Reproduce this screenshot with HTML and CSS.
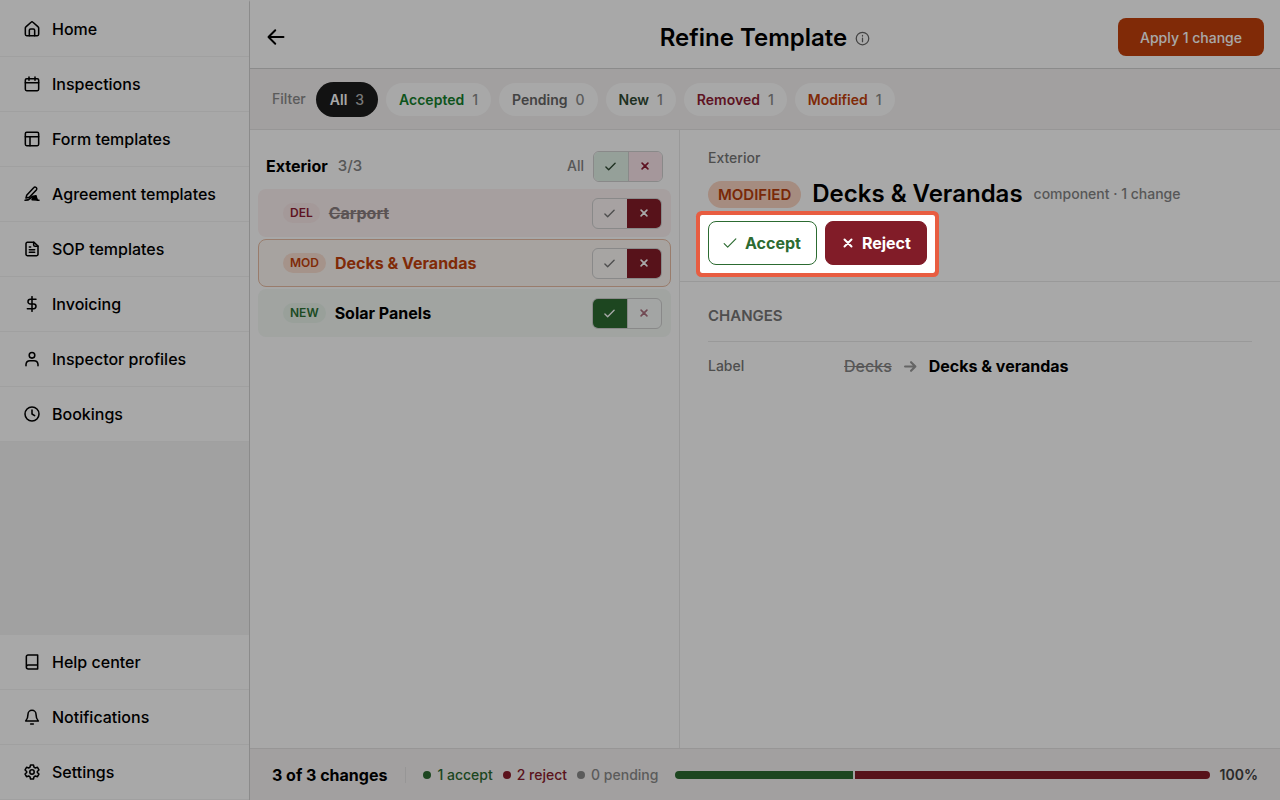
FILE: index.html
```html
<!DOCTYPE html>
<html lang="en">
    <head>
        <meta charset="utf-8">
        <meta name="viewport" content="width=device-width, initial-scale=1">
        <title>Refine Template</title>
        <link rel="stylesheet" href="styles.css">
    </head>
    <body>
        <!-- shared icons -->
        <svg class="sprite" aria-hidden="true">
            <symbol id="check" viewBox="0 0 24 24"><path d="M2 13l6 6L22 5"/></symbol>
            <symbol id="cross" viewBox="0 0 24 24"><path d="M5 5l14 14M19 5L5 19"/></symbol>
        </svg>

        <nav class="sidebar">
            <ul>
                <li><a href="#"><svg class="icon" viewBox="0 0 24 24"><path d="M2 10.500a2 2 0 0 1 .8-1.600l7.800-7a2 2 0 0 1 2.800 0l7.800 7a2 2 0 0 1 .8 1.600V20a2 2 0 0 1-2 2H4a2 2 0 0 1-2-2z"/><path d="M8 22v-8a2 2 0 0 1 2-2h4a2 2 0 0 1 2 2v8"/></svg>Home</a></li>
                <li><a href="#"><svg class="icon" viewBox="0 0 24 24"><rect x="2" y="4" width="20" height="18" rx="2"/><path d="M2 10h20M7.500 1.500v5M16.500 1.500v5"/></svg>Inspections</a></li>
                <li><a href="#"><svg class="icon" viewBox="0 0 24 24"><rect x="2" y="2" width="20" height="20" rx="2"/><path d="M2 8.500h20M9 8.500V22"/></svg>Form templates</a></li>
                <li><a href="#"><svg class="icon" viewBox="0 0 24 24"><path d="M4 14L14.500 2.500a2.600 2.600 0 0 1 4 3.400L8 17l-5 1z"/><path d="M1.500 21.500c4 0 6-1 8-3l3-3M20 21.500h2.500"/><path d="M12 20.500l2-5 4-1 1 4 1 2.500z" fill="currentColor"/></svg>Agreement templates</a></li>
                <li><a href="#"><svg class="icon" viewBox="0 0 24 24"><path d="M15 2H5a2 2 0 0 0-2 2v16a2 2 0 0 0 2 2h14a2 2 0 0 0 2-2V7.500z"/><path d="M14.500 2v4a2 2 0 0 0 2 2h4.500M8 9h2M8 13h8M8 17h8"/></svg>SOP templates</a></li>
                <li><a href="#"><svg class="icon" viewBox="0 0 24 24"><path d="M12 1v22M18 5H9.500a3.500 3.500 0 0 0 0 7h5a3.500 3.500 0 0 1 0 7H5"/></svg>Invoicing</a></li>
                <li><a href="#"><svg class="icon" viewBox="0 0 24 24"><circle cx="12" cy="6.500" r="4.200"/><path d="M3 22v-2a6 6 0 0 1 6-5.500h6a6 6 0 0 1 6 5.500v2"/></svg>Inspector profiles</a></li>
                <li><a href="#"><svg class="icon" viewBox="0 0 24 24"><circle cx="12" cy="12" r="10.500"/><path d="M12 6v6l4 2.500"/></svg>Bookings</a></li>
            </ul>
            <ul>
                <li><a href="#"><svg class="icon" viewBox="0 0 24 24"><path d="M3.500 19.500V4A2.500 2.500 0 0 1 6 1.500h14.500v21h-14a3 3 0 0 1 0-6h14"/></svg>Help center</a></li>
                <li><a href="#"><svg class="icon" viewBox="0 0 24 24"><path d="M6 8a6 6 0 0 1 12 0c0 6 1.500 8 3.500 10h-19C4.500 16 6 14 6 8z"/><path d="M10 22.500h4"/></svg>Notifications</a></li>
                <li><a href="#"><svg class="icon" viewBox="0 0 24 24"><path d="M9.800 1.500h4.400l.8 3.300 2 1.200 3.200-1 2.200 3.900-2.400 2.300v1.600l2.400 2.300-2.200 3.900-3.200-1-2 1.200-.8 3.300H9.800L9 19.200 7 18l-3.200 1-2.200-3.900L4 12.800v-1.600L1.600 8.900 3.800 5 7 6l2-1.200z"/><circle cx="12" cy="12" r="3.300"/></svg>Settings</a></li>
            </ul>
        </nav>

        <div class="page">
            <header class="page-header">
                <a class="back" href="#" aria-label="Back"><svg viewBox="0 0 24 24"><path d="M22 12H3M11 3L2 12l9 9"/></svg></a>
                <h1>Refine Template <svg class="info" viewBox="0 0 24 24"><circle cx="12" cy="12" r="10"/><path d="M12 17v-5.500M12 7v1"/></svg></h1>
                <button class="apply" type="button">Apply 1 change</button>
            </header>

            <div class="filters">
                <span class="filter-label">Filter</span>
                <button class="pill active" type="button">All <span>3</span></button>
                <button class="pill accepted" type="button">Accepted <span>1</span></button>
                <button class="pill pending" type="button">Pending <span>0</span></button>
                <button class="pill new" type="button">New <span>1</span></button>
                <button class="pill removed" type="button">Removed <span>1</span></button>
                <button class="pill modified" type="button">Modified <span>1</span></button>
            </div>

            <main class="panes">
                <section class="list">
                    <div class="group">
                        <h2>Exterior</h2>
                        <span class="group-count">3/3</span>
                        <span class="group-all">All</span>
                        <div class="toggle toggle-all">
                            <button class="yes" type="button" aria-label="Accept all"><svg><use href="#check"/></svg></button>
                            <button class="no" type="button" aria-label="Reject all"><svg><use href="#cross"/></svg></button>
                        </div>
                    </div>
                    <div class="row row-del">
                        <span class="tag tag-del">DEL</span>
                        <span class="row-name">Carport</span>
                        <div class="toggle">
                            <button class="yes" type="button" aria-label="Accept"><svg><use href="#check"/></svg></button>
                            <button class="no on" type="button" aria-label="Reject"><svg><use href="#cross"/></svg></button>
                        </div>
                    </div>
                    <div class="row row-mod">
                        <span class="tag tag-mod">MOD</span>
                        <span class="row-name">Decks &amp; Verandas</span>
                        <div class="toggle">
                            <button class="yes" type="button" aria-label="Accept"><svg><use href="#check"/></svg></button>
                            <button class="no on" type="button" aria-label="Reject"><svg><use href="#cross"/></svg></button>
                        </div>
                    </div>
                    <div class="row row-new">
                        <span class="tag tag-new">NEW</span>
                        <span class="row-name">Solar Panels</span>
                        <div class="toggle">
                            <button class="yes on" type="button" aria-label="Accept"><svg><use href="#check"/></svg></button>
                            <button class="no" type="button" aria-label="Reject"><svg><use href="#cross"/></svg></button>
                        </div>
                    </div>
                </section>

                <section class="detail">
                    <div class="detail-head">
                        <p class="crumb">Exterior</p>
                        <div class="detail-title">
                            <span class="badge">MODIFIED</span>
                            <h2>Decks &amp; Verandas</h2>
                            <span class="meta">component · 1 change</span>
                        </div>
                        <div class="actions">
                            <button class="accept" type="button"><svg><use href="#check"/></svg>Accept</button>
                            <button class="reject" type="button"><svg><use href="#cross"/></svg>Reject</button>
                        </div>
                    </div>
                    <div class="changes">
                        <h3>CHANGES</h3>
                        <dl>
                            <dt>Label</dt>
                            <dd>
                                <del>Decks</del>
                                <svg class="arrow" viewBox="0 0 24 24"><path d="M2 12h19M13 4l8 8-8 8"/></svg>
                                <ins>Decks &amp; verandas</ins>
                            </dd>
                        </dl>
                    </div>
                </section>
            </main>

            <footer class="summary">
                <strong>3 of 3 changes</strong>
                <div class="counts">
                    <span class="count-accept">1 accept</span>
                    <span class="count-reject">2 reject</span>
                    <span class="count-pending">0 pending</span>
                </div>
                <div class="progress">
                    <div class="bar-accept"></div>
                    <div class="bar-reject"></div>
                </div>
                <span class="percent">100%</span>
            </footer>
        </div>
    </body>
</html>
```

FILE: styles.css
```css
* {
    box-sizing: border-box;
}

body {
    margin: 0;
    min-height: 100vh;
    display: flex;
    overflow: hidden;
    font-family: Inter, "Liberation Sans", sans-serif;
    font-size: 16px;
    font-weight: 500;
    line-height: 24px;
    color: #000;
    background-color: #fff;
}

h1, h2, h3, p, ul, dl, dd {
    margin: 0;
    padding: 0;
}

button {
    font-family: inherit;
    cursor: pointer;
}

svg {
    flex: none;
    fill: none;
    stroke: currentColor;
    stroke-width: 2;
    stroke-linecap: round;
    stroke-linejoin: round;
}

.sprite {
    position: absolute;
    width: 0;
    height: 0;
}

/* sidebar */
.sidebar {
    flex: none;
    width: 250px;
    display: flex;
    flex-direction: column;
    justify-content: space-between;
    background-color: #f5f5f5;
    border-top: 2px solid #fff;
    border-right: 1px solid #d4d4d4;
}

.sidebar ul {
    list-style-type: none;
}

.sidebar a {
    display: flex;
    align-items: center;
    gap: 12px;
    height: 55px;
    padding: 0 24px;
    color: #000;
    background-color: #fff;
    border-bottom: 1px solid #f3f3f3;
    text-decoration: none;
}

.icon {
    width: 16px;
    height: 16px;
    stroke-width: 2.3;
}

/* header */
.page {
    flex: 1;
    min-width: 0;
    display: flex;
    flex-direction: column;
}

.page-header {
    display: grid;
    grid-template-columns: 1fr auto 1fr;
    align-items: center;
    height: 69px;
    padding: 6px 16px 0;
    border-bottom: 1px solid #d4d4d4;
}

.back {
    display: flex;
    justify-self: start;
    padding-left: 1px;
    color: #000;
}

.back svg {
    width: 18px;
    height: 18px;
    stroke-width: 2.6;
}

h1 {
    display: flex;
    align-items: center;
    gap: 8px;
    padding-top: 2px;
    font-size: 24px;
    line-height: 32px;
    font-weight: 600;
}

.info {
    width: 15px;
    height: 15px;
    color: #666;
}

.apply {
    justify-self: end;
    height: 38px;
    padding: 0 22px;
    border: 0;
    border-radius: 8px;
    background-color: #c2410c;
    color: #fff;
    font-size: 14px;
    font-weight: 500;
}

/* filters */
.filters {
    display: flex;
    align-items: center;
    gap: 8px;
    height: 61px;
    padding: 0 22px;
    background-color: #f6f3f3;
    border-bottom: 1px solid #e6e4e4;
    font-size: 14px;
}

.filter-label {
    margin-right: 2px;
    color: #8b8b8b;
}

.pill {
    display: flex;
    align-items: center;
    gap: 8px;
    height: 33px;
    padding: 0 13px;
    border: 0;
    border-radius: 18px;
    background-color: #fff;
    font-size: 14px;
    font-weight: 600;
}

.pill span {
    color: #8b8b8b;
    font-weight: 500;
}

.pill.active {
    height: 35px;
    padding: 0 14px;
    background-color: #1c1c1c;
    color: #fff;
}

.pill.active span {
    color: #b8b8b8;
}

.accepted {
    color: #15802d;
}

.pending {
    color: #666;
}

.new {
    color: #2f4a33;
}

.removed {
    color: #8f1d35;
}

.modified {
    color: #c2410c;
}

/* list of changes */
.panes {
    flex: 1;
    display: grid;
    grid-template-columns: 430px 1fr;
}

.list {
    display: flex;
    flex-direction: column;
    gap: 2px;
    padding: 15px 8px;
    border-right: 1px solid #e8e8e8;
}

.group {
    display: flex;
    align-items: center;
    height: 42px;
    padding: 0 8px;
}

.group h2 {
    font-size: 16px;
    font-weight: 700;
}

.group-count {
    margin-left: 10px;
    font-size: 15px;
    color: #858585;
}

.group-all {
    margin-left: auto;
    margin-right: 9px;
    font-size: 14px;
    color: #858585;
}

.row {
    display: flex;
    align-items: center;
    gap: 9px;
    height: 48px;
    padding: 0 8px 0 24px;
    border: 1px solid transparent;
    border-radius: 8px;
}

.row-name {
    flex: 1;
    font-weight: 700;
}

.row-del {
    background-color: #fcf1f1;
}

.row-del .row-name {
    color: #8a7f80;
    text-decoration: line-through;
}

.row-mod {
    background-color: #fdf8f3;
    border-color: #e8bda4;
}

.row-mod .row-name {
    color: #c2410c;
}

.row-new {
    background-color: #f4f9f5;
}

.tag {
    padding: 0 7px;
    border-radius: 10px;
    font-size: 12px;
    line-height: 20px;
    font-weight: 600;
}

.tag-del {
    background-color: #f9e8e8;
    color: #8f1d35;
}

.tag-mod {
    background-color: #fbdfd2;
    color: #c2410c;
}

.tag-new {
    background-color: #e8f3ea;
    color: #2d7236;
}

.toggle {
    display: flex;
    width: 70px;
    height: 31px;
    overflow: hidden;
    border: 1px solid #d0d0d0;
    border-radius: 6px;
    background-color: rgba(255, 255, 255, 0.4);
}

.toggle button {
    flex: 1;
    display: flex;
    align-items: center;
    justify-content: center;
    padding: 0;
    border: 0;
    background-color: transparent;
    color: #777;
}

.toggle .no {
    border-left: 1px solid #d0d0d0;
    color: #ad7180;
}

.toggle svg {
    width: 11px;
    height: 11px;
    stroke-width: 3;
}

.toggle .no svg {
    width: 10px;
    height: 10px;
    stroke-width: 4;
}

.toggle .yes.on {
    background-color: #2c6b31;
    color: #fff;
}

.toggle .no.on {
    background-color: #851c28;
    border-color: #851c28;
    color: #fff;
}

.toggle-all .yes {
    background-color: #e3f3e9;
    color: #2f4a33;
}

.toggle-all .no {
    background-color: #fbe6ec;
    color: #8f1d35;
}

/* detail */
.detail-head {
    height: 152px;
    padding: 16px 28px;
    border-bottom: 1px solid #e8e8e8;
}

.crumb {
    font-size: 14px;
    color: #777;
}

.detail-title {
    display: flex;
    align-items: center;
    gap: 11px;
    margin: 8px 0 11px;
}

.detail-title h2 {
    font-size: 24px;
    line-height: 32px;
    font-weight: 600;
}

.badge {
    padding: 0 10px;
    border-radius: 14px;
    background-color: #fbd5c2;
    color: #b83d0b;
    font-size: 15px;
    line-height: 27px;
    font-weight: 600;
}

.meta {
    font-size: 14px;
    color: #858585;
}

.actions {
    position: relative;
    display: flex;
    gap: 8px;
    width: fit-content;
}

/* spotlight: dims everything but the two buttons */
.actions::after {
    content: "";
    position: absolute;
    inset: -6px -8px -8px;
    z-index: 10;
    border-radius: 2px;
    box-shadow: 0 0 0 4px #e85d41, 0 0 0 9999px rgba(0, 0, 0, 0.34);
    pointer-events: none;
}

.actions button {
    display: flex;
    align-items: center;
    gap: 8px;
    height: 44px;
    padding: 0 15px 0 14px;
    border: 1px solid #2c6b31;
    border-radius: 8px;
    background-color: #fff;
    color: #2c6b31;
    font-size: 16px;
    font-weight: 700;
}

.actions svg {
    width: 14px;
    height: 14px;
}

.actions .reject {
    padding-left: 16px;
    border-color: #811c28;
    background-color: #811c28;
    color: #fff;
}

.actions .reject svg {
    width: 12px;
    height: 12px;
    stroke-width: 4;
}

.changes {
    padding: 22px 28px;
}

.changes h3 {
    padding-bottom: 13px;
    border-bottom: 1px solid #e8e8e8;
    font-size: 15px;
    font-weight: 600;
    color: #777;
}

.changes dl {
    display: grid;
    grid-template-columns: 136px 1fr;
    padding-top: 12px;
}

.changes dt {
    font-size: 14px;
    color: #777;
}

.changes dd {
    display: flex;
    align-items: center;
    gap: 12px;
}

.changes del {
    color: #858585;
}

.changes ins {
    font-weight: 700;
    text-decoration: none;
}

.arrow {
    width: 13px;
    height: 13px;
    color: #999;
    stroke-width: 4;
}

/* footer */
.summary {
    display: flex;
    align-items: center;
    height: 52px;
    padding: 0 22px;
    background-color: #f6f3f3;
    border-top: 1px solid #e6e4e4;
    font-size: 14px;
}

.summary strong {
    padding-right: 18px;
    border-right: 1px solid #e6e4e4;
    font-size: 16px;
    line-height: 16px;
    font-weight: 700;
}

.counts {
    display: flex;
    gap: 10px;
    margin: 0 17px;
}

.counts span {
    display: flex;
    align-items: center;
    gap: 6px;
}

.counts span::before {
    content: "";
    width: 8px;
    height: 8px;
    border-radius: 50%;
    background-color: currentColor;
}

.count-accept {
    color: #2c6b31;
}

.count-reject {
    color: #8a1c2c;
}

.count-pending {
    color: #8b8b8b;
}

.progress {
    flex: 1;
    display: flex;
    gap: 2px;
    height: 8px;
    overflow: hidden;
    border-radius: 4px;
}

.bar-accept {
    flex: 1;
    background-color: #2c6b31;
}

.bar-reject {
    flex: 2;
    background-color: #851c28;
}

.percent {
    margin-left: 10px;
    color: #404040;
    font-weight: 600;
}
```
